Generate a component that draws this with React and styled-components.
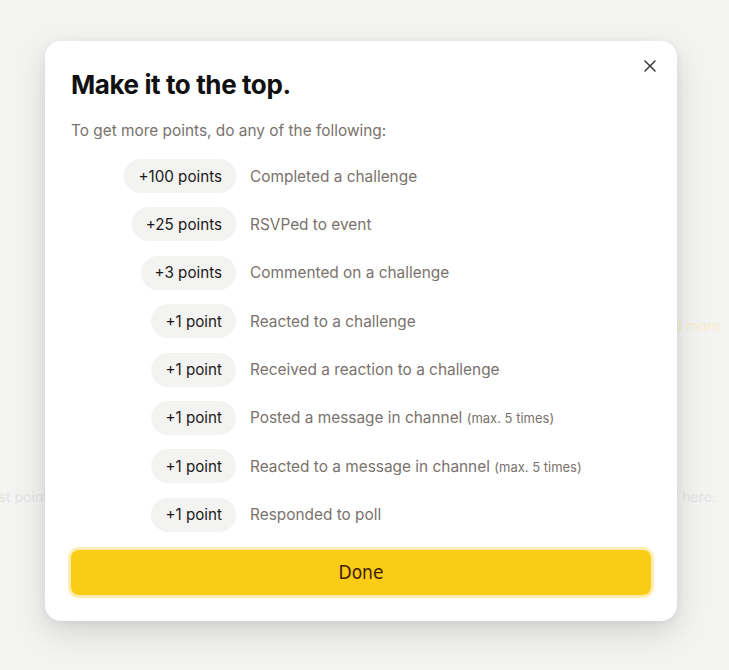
import React from "react";
import styled, { createGlobalStyle } from "styled-components";

const GlobalStyle = createGlobalStyle`
  html, body {
    margin: 0;
    padding: 0;
    background: #f3f3f2;
    font-family: Inter, "Noto Sans", sans-serif;
  }
  * { box-sizing: border-box; }
`;

const Page = styled.div`
  position: relative;
  width: 729px;
  height: 670px;
  overflow: hidden;
  background: #f3f3f2;
`;

const Backdrop = styled.div`
  display: flex;
  flex-direction: column;
  padding-top: 316px;
  gap: 151px;
  font-size: 14px;
  line-height: 20px;
`;

const BackRow = styled.div`
  display: flex;
  justify-content: space-between;
  white-space: nowrap;
`;

const BackCell = styled.div`
  width: ${(p) => p.$w}px;
  padding-right: ${(p) => p.$pr || 0}px;
  display: flex;
  justify-content: flex-end;
  overflow: hidden;
  color: ${(p) => (p.$accent ? "#f7eecb" : "#e3e3e2")};
`;

const Overlay = styled.div`
  position: absolute;
  inset: 0;
  padding: 41px 0 0 45px;
`;

const Modal = styled.div`
  width: 632px;
  height: 580px;
  background: #fff;
  border-radius: 16px;
  box-shadow: 0 12px 32px rgba(0, 0, 0, 0.13), 0 2px 8px rgba(0, 0, 0, 0.06);
  padding: 28px 26px 26px;
  display: flex;
  flex-direction: column;
  position: relative;
`;

const CloseButton = styled.button`
  position: absolute;
  top: 9px;
  right: 11px;
  width: 32px;
  height: 32px;
  display: flex;
  align-items: center;
  justify-content: center;
  border: none;
  background: transparent;
  padding: 0;
  color: #3a3a3a;
  cursor: pointer;
`;

const Title = styled.h1`
  margin: 0;
  font-size: 26px;
  line-height: 32px;
  font-weight: 700;
  letter-spacing: -0.4px;
  color: #111;
`;

const Subtitle = styled.p`
  margin: 20px 0 0;
  font-size: 15.4px;
  line-height: 20px;
  color: #7a726c;
`;

const List = styled.div`
  margin-top: 18px;
  display: grid;
  grid-template-columns: 165px 1fr;
  column-gap: 14px;
  row-gap: 14.4px;
  align-items: center;
`;

const Pill = styled.span`
  justify-self: end;
  height: 34px;
  padding: 0 14px;
  border-radius: 17px;
  background: #f3f3f2;
  display: flex;
  align-items: center;
  font-size: 15.2px;
  color: #1a1a1a;
  white-space: nowrap;
`;

const Label = styled.span`
  font-size: 15.4px;
  color: #7a726c;
  white-space: nowrap;
`;

const Note = styled.span`
  font-size: 13px;
`;

const DoneButton = styled.button`
  margin-top: 18px;
  height: 45px;
  width: 100%;
  border: none;
  border-radius: 8px;
  background: #facc15;
  box-shadow: 0 0 0 3px #fdedb2;
  font-family: "DejaVu Sans Condensed", "DejaVu Sans", sans-serif;
  font-stretch: condensed;
  font-size: 19px;
  color: #42200a;
  cursor: pointer;
`;

const rows = [
  ["+100 points", "Completed a challenge"],
  ["+25 points", "RSVPed to event"],
  ["+3 points", "Commented on a challenge"],
  ["+1 point", "Reacted to a challenge"],
  ["+1 point", "Received a reaction to a challenge"],
  ["+1 point", "Posted a message in channel", "(max. 5 times)"],
  ["+1 point", "Reacted to a message in channel", "(max. 5 times)"],
  ["+1 point", "Responded to poll"],
];

export default function App() {
  return (
    <Page>
      <GlobalStyle />
      <Backdrop>
        <BackRow>
          <span />
          <BackCell $w={200} $pr={9} $accent>Read more</BackCell>
        </BackRow>
        <BackRow>
          <BackCell $w={55}>Earn the most points</BackCell>
          <BackCell $w={200} $pr={13}>will appear here.</BackCell>
        </BackRow>
      </Backdrop>
      <Overlay>
        <Modal>
          <CloseButton aria-label="Close">
            <svg width="12" height="12" viewBox="0 0 12 12" fill="none" stroke="currentColor" strokeWidth="1.5" strokeLinecap="round">
              <path d="M1 1L11 11M11 1L1 11" />
            </svg>
          </CloseButton>
          <Title>Make it to the top.</Title>
          <Subtitle>To get more points, do any of the following:</Subtitle>
          <List>
            {rows.map(([pts, label, note], i) => (
              <React.Fragment key={i}>
                <Pill>{pts}</Pill>
                <Label>
                  {label}
                  {note && <> <Note>{note}</Note></>}
                </Label>
              </React.Fragment>
            ))}
          </List>
          <DoneButton>Done</DoneButton>
        </Modal>
      </Overlay>
    </Page>
  );
}
